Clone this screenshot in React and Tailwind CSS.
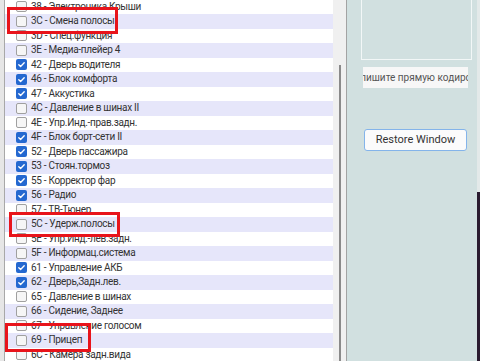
const items = [
  { id: '38', name: 'Электроника Крыши', on: false },
  { id: '3C', name: 'Смена полосы', on: false },
  { id: '3D', name: 'Спец.функция', on: false },
  { id: '3E', name: 'Медиа-плейер 4', on: false },
  { id: '42', name: 'Дверь водителя', on: true },
  { id: '46', name: 'Блок комфорта', on: true },
  { id: '47', name: 'Аккустика', on: true },
  { id: '4C', name: 'Давление в шинах II', on: false },
  { id: '4E', name: 'Упр.Инд.-прав.задн.', on: false },
  { id: '4F', name: 'Блок борт-сети II', on: true },
  { id: '52', name: 'Дверь пассажира', on: true },
  { id: '53', name: 'Стоян.тормоз', on: true },
  { id: '55', name: 'Корректор фар', on: true },
  { id: '56', name: 'Радио', on: true },
  { id: '57', name: 'ТВ-Тюнер', on: false },
  { id: '5C', name: 'Удерж.полосы', on: false },
  { id: '5E', name: 'Упр.Инд.-лев.задн.', on: false },
  { id: '5F', name: 'Информац.система', on: false },
  { id: '61', name: 'Управление АКБ', on: true },
  { id: '62', name: 'Дверь,Задн.лев.', on: true },
  { id: '65', name: 'Давление в шинах', on: false },
  { id: '66', name: 'Сидение, Заднее', on: false },
  { id: '67', name: 'Управление голосом', on: false },
  { id: '69', name: 'Прицеп', on: false },
  { id: '6C', name: 'Камера задн.вида', on: false },
];

function Check({ on }) {
  if (on) {
    return (
      <span className="flex h-[11px] w-[11px] shrink-0 items-center justify-center rounded-[2px] bg-[#2468d0]">
        <svg width="9" height="9" viewBox="0 0 10 10" fill="none">
          <path d="M2 5.2l2 2L8 3" stroke="#fff" strokeWidth="1.5" strokeLinecap="round" strokeLinejoin="round" />
        </svg>
      </span>
    );
  }
  return <span className="h-[11px] w-[11px] shrink-0 rounded-[2px] border border-[#a0a0a0] bg-[#f6f6f6]" />;
}

function Row({ item, index }) {
  return (
    <div
      className={`flex h-[14.5px] items-center gap-[4px] pl-[11px] ${
        index % 2 === 1 ? 'bg-[#e6e6fa]' : 'bg-white'
      }`}
    >
      <Check on={item.on} />
      <span className="whitespace-nowrap text-[10px] leading-none tracking-[-0.3px] text-[#333]">
        {item.id} - {item.name}
      </span>
    </div>
  );
}

export default function App() {
  return (
    <div className="relative flex h-[361px] w-[480px] overflow-hidden bg-white font-['Roboto',sans-serif]">
      {/* left frame edge */}
      <div className="w-[5px] shrink-0 border-r border-[#a8a8a8] bg-[#e6e6e6]" />

      {/* module list */}
      <div className="mt-[-0.5px] w-[328px] shrink-0">
        {items.map((item, i) => (
          <Row key={item.id} item={item} index={i} />
        ))}
      </div>

      {/* scrollbar track */}
      <div className="flex w-[14px] shrink-0 border-r border-[#a3a3a3] bg-[#f0f0f0] pl-[6px] pt-[65px]">
        <div className="h-full w-[2px] bg-[#8a8a8a]" />
      </div>

      {/* side panel */}
      <div className="flex w-[130px] shrink-0 flex-col bg-[#d1e0e0]">
        <div className="ml-[14px] mr-[5px] mt-[-10px] h-[70px] border border-[#f2f7f7]" />
        <div className="ml-[16px] mt-[7px] flex h-[21px] w-[105px] items-center overflow-hidden bg-[#f7f7f7]">
          <span className="ml-[-9px] whitespace-nowrap text-[10px] text-[#555]">Впишите прямую кодировку</span>
        </div>
        <button className="ml-[17px] mt-[41px] h-[22px] w-[103px] rounded-[3px] border border-[#84b4ea] bg-[#fbfbfb] text-[11px] text-[#333]">
          Restore Window
        </button>
      </div>

      {/* desktop edge */}
      <div className="flex w-[3px] shrink-0 flex-col">
        <div className="h-[192px] bg-[#e3e9e9]" />
        <div className="flex-1 bg-[#2a1b30]" />
      </div>

      {/* annotation boxes */}
      <div className="absolute left-[7px] top-[7px] h-[27px] w-[111px] border-[3px] border-[#e8141b]" />
      <div className="absolute left-[9px] top-[212px] h-[25px] w-[111px] border-[3px] border-[#e8141b]" />
      <div className="absolute left-[5px] top-[323px] h-[29px] w-[86px] border-[3px] border-[#e8141b]" />
    </div>
  );
}
